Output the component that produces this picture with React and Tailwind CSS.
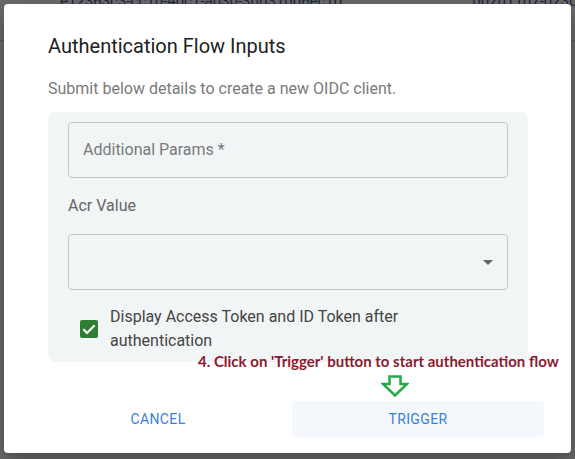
import React from "react";

export default function App() {
  return (
    <div className="relative w-[575px] h-[459px] overflow-hidden bg-[#6b6b6b]" style={{ fontFamily: "Roboto, 'Liberation Sans', sans-serif" }}>
      {/* background page (dimmed) */}
      <div className="flex gap-[130px] pl-[60px] -mt-[10px] text-[15px] text-[#1c2540] whitespace-nowrap">
        <span>e12363c3-cc10-40c1-a030-30b31006ec10</span>
        <span>00201107-0230-410a-03c7-03</span>
      </div>
      <div className="absolute left-0 top-[40px] w-full h-px bg-[#5a5a5a]" />

      {/* dialog */}
      <div className="absolute left-[4px] top-[4px] w-[567px] h-[449px] bg-white rounded-[4px] shadow-[0_8px_20px_rgba(0,0,0,0.35)] flex flex-col">
        <div className="pl-[44px] pt-[27px] text-[20px] leading-[30px] text-[#212121]">Authentication Flow Inputs</div>
        <div className="pl-[44px] mt-[18px] text-[16px] leading-[20px] text-[#7a7a7a]">Submit below details to create a new OIDC client.</div>

        <div className="ml-[44px] mr-[43px] mt-[13px] h-[250px] bg-[#f1f5f6] rounded-[8px] px-[20px] pt-[10px] flex flex-col">
          <div className="h-[56px] border border-[#c4c4c4] rounded-[4px] flex items-center pl-[14px] text-[16px] text-[#7a7a7a]">
            Additional Params *
          </div>
          <div className="mt-[18px] text-[16px] leading-[20px] text-[#666]">Acr Value</div>
          <div className="mt-[18px] h-[56px] border border-[#c4c4c4] rounded-[4px] flex items-center justify-end pr-[14px]">
            <svg width="10" height="5" viewBox="0 0 10 5"><path d="M0 0 L10 0 L5 5 Z" fill="#666" /></svg>
          </div>
          <div className="mt-[15px] flex items-start pl-[12px]">
            <div className="mt-[15px] w-[18px] h-[18px] rounded-[2px] bg-[#2e7d32] flex items-center justify-center shrink-0">
              <svg width="16" height="16" viewBox="0 0 24 24"><path d="M3.5 12.5 L9 18 L20.5 6.5" fill="none" stroke="white" strokeWidth="3.2" /></svg>
            </div>
            <div className="ml-[12px] text-[16px] leading-[24px] text-[#444] w-[330px]">
              Display Access Token and ID Token after authentication
            </div>
          </div>
        </div>

        <div className="relative">
          <div className="absolute left-[194px] -top-[10px] text-[15px] leading-[18px] font-bold text-[#8b1a2e] whitespace-nowrap" style={{ fontFamily: "Lato, 'Open Sans', sans-serif" }}>
            4. Click on 'Trigger' button to start authentication flow
          </div>
          <svg className="absolute left-[377px] top-[13px]" width="28" height="22" viewBox="0 0 28 22">
            <path d="M8.5 1.5 H19.5 V9 H26 L14 20.5 L2 9 H8.5 Z" fill="none" stroke="#22aa44" strokeWidth="2.5" />
          </svg>
        </div>

        <div className="mt-[39px] pl-[28px] flex gap-[8px]">
          <div className="w-[252px] h-[36px] flex items-center justify-center text-[14px] tracking-[0.4px] text-[#3a80d6]">CANCEL</div>
          <div className="w-[252px] h-[36px] rounded-[4px] bg-[#f4f8fc] flex items-center justify-center text-[14px] tracking-[0.4px] text-[#3a80d6]">TRIGGER</div>
        </div>
      </div>
    </div>
  );
}
